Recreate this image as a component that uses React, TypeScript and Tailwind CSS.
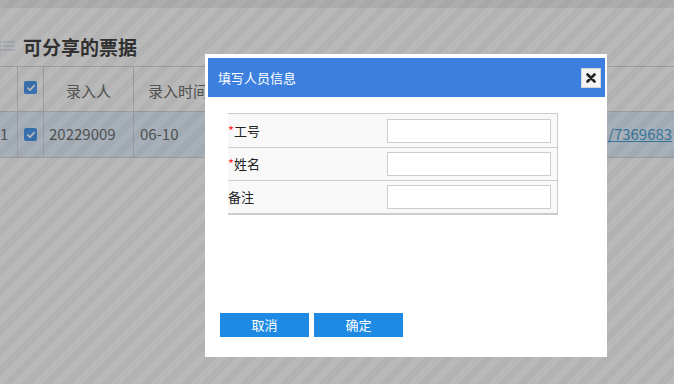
import React from 'react';

const cjk = { fontFamily: '"Noto Sans CJK SC", "Noto Sans", sans-serif' };

const CheckBox = () => (
    <div className="w-[13px] h-[13px] rounded-[2px] bg-[#4f9cf2] flex items-center justify-center">
        <svg viewBox="0 0 12 12" className="w-[10px] h-[10px]">
            <path d="M2.2 6.2 L4.8 8.6 L9.8 3.2" fill="none" stroke="#ffffff" strokeWidth="2" strokeLinecap="round" strokeLinejoin="round" />
        </svg>
    </div>
);

const ListIcon = () => (
    <svg viewBox="0 0 16 10" className="w-[16px] h-[10px]">
        <circle cx="1.5" cy="1" r="1" fill="#d2deec" />
        <circle cx="1.5" cy="5" r="1" fill="#d2deec" />
        <circle cx="1.5" cy="9" r="1" fill="#d2deec" />
        <path d="M4 1 H16 M4 5 H16 M4 9 H16" stroke="#c6d6ea" strokeWidth="1" />
    </svg>
);

const fields = [
    { label: '工号', required: true },
    { label: '姓名', required: true },
    { label: '备注', required: false },
];

const App: React.FC = () => {
    return (
        <div className="relative w-[674px] h-[384px] overflow-hidden bg-white" style={cjk}>
            {/* page underneath */}
            <div className="h-[8px] bg-[#efefef]" />
            <div className="h-[58px] flex items-center gap-[8px] pt-[18px] -ml-[1px]">
                <ListIcon />
                <h1 className="text-[19px] font-bold text-[#444] leading-none">可分享的票据</h1>
            </div>
            <div className="border-t border-[#d8d8d8]">
                <div className="grid grid-cols-[18px_26px_90px_1fr] h-[45px] border-b border-[#d8d8d8] text-[15px] text-[#707070]">
                    <div className="border-r border-[#d8d8d8]" />
                    <div className="border-r border-[#d8d8d8] flex justify-center pt-[14px]"><CheckBox /></div>
                    <div className="border-r border-[#d8d8d8] flex items-center justify-center pt-[5px]">录入人</div>
                    <div className="flex items-center pl-[14px] pt-[5px]">录入时间</div>
                </div>
                <div className="grid grid-cols-[18px_26px_90px_1fr] h-[46px] border-b border-[#d8d8d8] bg-[#e6f3ff] text-[15px] text-[#707070]">
                    <div className="border-r border-[#d8d8d8] flex items-center">1</div>
                    <div className="border-r border-[#d8d8d8] flex items-center justify-center"><CheckBox /></div>
                    <div className="border-r border-[#d8d8d8] flex items-center pl-[5px]">20229009</div>
                    <div className="flex items-center pl-[6px]">
                        <span>06-10</span>
                        <span className="ml-auto underline text-[#4aa3d8] w-[66px] whitespace-nowrap overflow-hidden">/7369683</span>
                    </div>
                </div>
            </div>

            {/* mask */}
            <div className="absolute inset-0 bg-[repeating-linear-gradient(135deg,rgba(0,0,0,0.275)_0px,rgba(0,0,0,0.275)_7px,rgba(0,0,0,0.3)_7px,rgba(0,0,0,0.3)_14px)]" />

            {/* dialog */}
            <div className="absolute left-[205px] top-[54px] w-[402px] h-[303px] bg-white pt-[4px] pl-[3px] pr-[2px] flex flex-col">
                <div className="h-[39px] bg-[#3d7fde] flex items-center justify-between pl-[10px] pr-[4px]">
                    <span className="text-[13px] text-white">填写人员信息</span>
                    <button className="w-[20px] h-[20px] bg-[#f4f4f4] border border-[#d6d6d6] flex items-center justify-center">
                        <svg viewBox="0 0 10 10" className="w-[10px] h-[10px]">
                            <path d="M1.5 1.5 L8.5 8.5 M8.5 1.5 L1.5 8.5" stroke="#222" strokeWidth="2.6" strokeLinecap="round" />
                        </svg>
                    </button>
                </div>
                <div className="mt-[16px] ml-[20px] w-[330px] bg-[#f8f8f8] border-t border-r border-b-2 border-[#cccccc]">
                    {fields.map((f, i) => (
                        <div key={f.label} className={`h-[33px] flex items-center justify-between pr-[6px] ${i > 0 ? 'border-t border-[#cccccc]' : ''}`}>
                            <span className="text-[13px] text-[#222]">
                                {f.required && <span className="text-[#ff2a2a]">*</span>}
                                {f.label}
                            </span>
                            <input className="w-[164px] h-[24px] bg-white border border-[#cccccc] outline-none" />
                        </div>
                    ))}
                </div>
                <div className="mt-auto mb-[20px] ml-[12px] flex gap-[5px]">
                    <button className="w-[89px] h-[24px] bg-[#1e8ae4] text-white text-[13px]">取消</button>
                    <button className="w-[89px] h-[24px] bg-[#1e8ae4] text-white text-[13px]">确定</button>
                </div>
            </div>
        </div>
    );
};

export default App;
